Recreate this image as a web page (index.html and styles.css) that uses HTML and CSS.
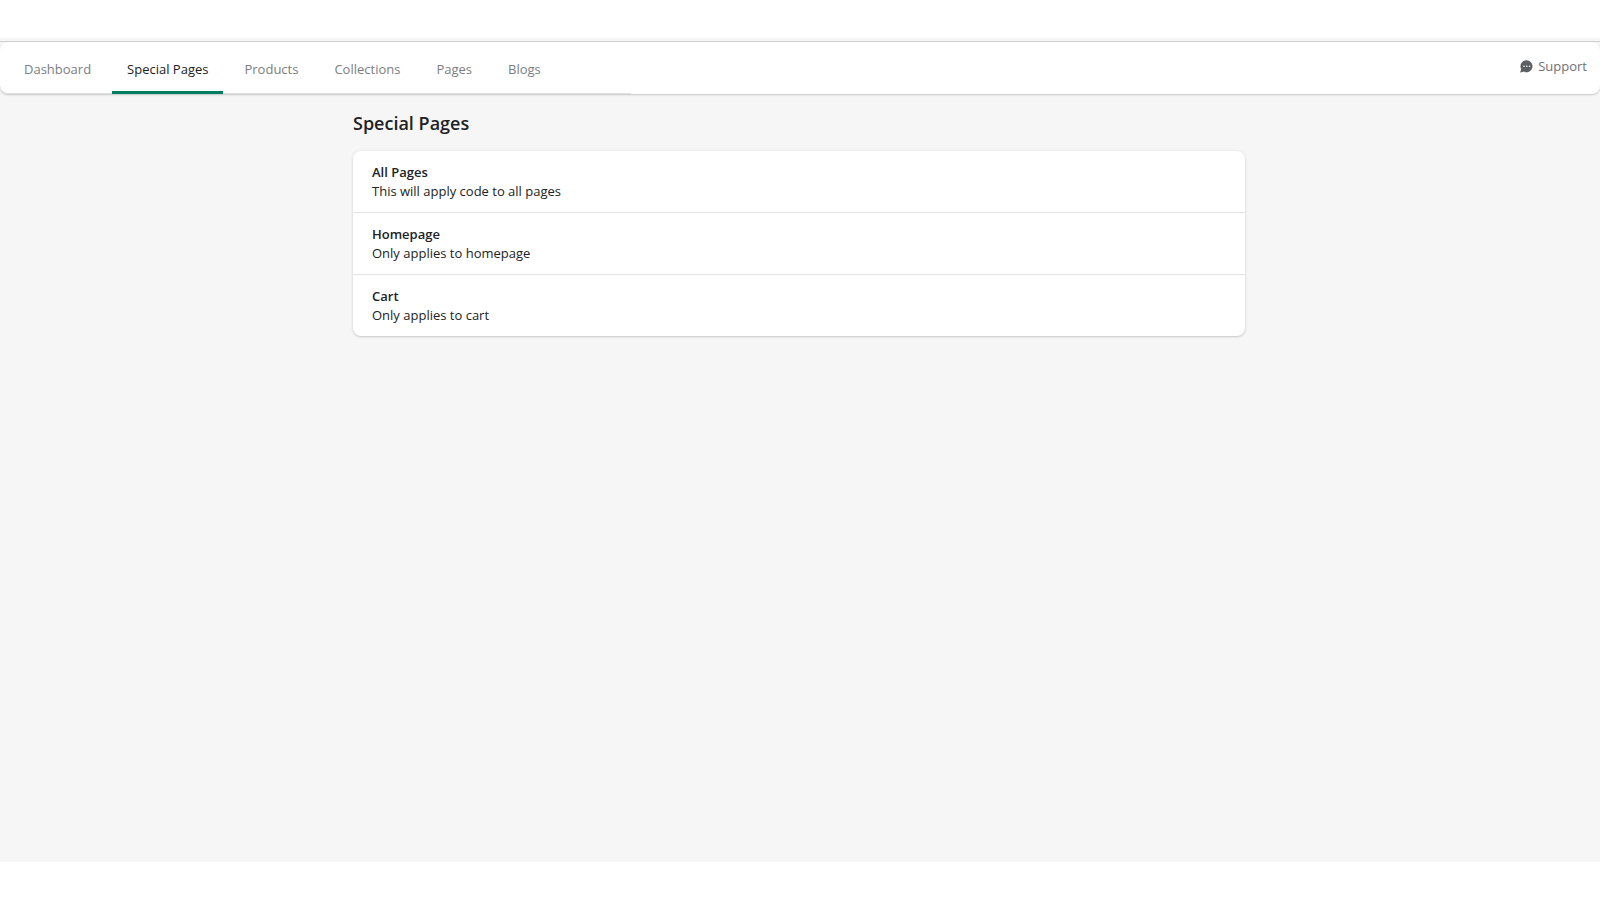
FILE: index.html
```html
<!DOCTYPE html>
<html lang="en">
<head>
<meta charset="utf-8">
<title>Special Pages</title>
<link rel="stylesheet" href="styles.css">
</head>
<body>
<div class="app">
  <header class="topbar">
    <nav class="tabs" aria-label="Main">
      <a class="tab" href="#dashboard">Dashboard</a>
      <a class="tab tab-active" href="#special" aria-current="page">Special Pages</a>
      <a class="tab" href="#products">Products</a>
      <a class="tab" href="#collections">Collections</a>
      <a class="tab" href="#pages">Pages</a>
      <a class="tab" href="#blogs">Blogs</a>
    </nav>
    <a class="support" href="#support">
      <svg class="support-icon" viewBox="0 0 13 13" aria-hidden="true">
        <path fill="#5c5f62" d="M6.8.2a6 6 0 1 1-2.9 11.400L.8 12.500c-.4.1-.6-.2-.5-.5l.9-3A6 6 0 0 1 6.800.2Z"/>
        <g fill="#fff"><circle cx="4" cy="6.300" r=".8"/><circle cx="6.800" cy="6.300" r=".8"/><circle cx="9.600" cy="6.300" r=".8"/></g>
      </svg>
      Support
    </a>
  </header>
  <main class="page">
    <h1 class="title">Special Pages</h1>
    <ul class="card">
      <li class="row"><h2 class="row-title">All Pages</h2><p class="row-text">This will apply code to all pages</p></li>
      <li class="row"><h2 class="row-title">Homepage</h2><p class="row-text">Only applies to homepage</p></li>
      <li class="row"><h2 class="row-title">Cart</h2><p class="row-text">Only applies to cart</p></li>
    </ul>
  </main>
</div>
</body>
</html>
```
FILE: styles.css
```css
* { box-sizing: border-box; }

body {
  margin: 0;
  min-height: 100vh;
  display: flex;
  flex-direction: column;
  padding: 38px 0;
  background: #fff;
  color: #202223;
  font: 13px/19px "Segoe UI", "Open Sans", "Noto Sans", sans-serif;
}

.app {
  flex: 1;
  background: #f6f6f6;
}

.app::before {
  content: "";
  display: block;
  height: 3px;
  border-bottom: 1px solid #cfcfcf;
}

.topbar {
  display: flex;
  justify-content: space-between;
  align-items: flex-start;
  border-radius: 8px;
  background: #fff;
  box-shadow: 0 1px 2px rgba(0, 0, 0, 0.2);
}

.tabs {
  display: flex;
  gap: 6px;
  padding: 0 75px 0 9px;
  border-radius: 0 0 0 8px;
  box-shadow: inset 0 -1px #dfdfdf;
}

.tab {
  padding: 18px 15px 12px;
  border-bottom: 3px solid transparent;
  color: #7b7e81;
  text-decoration: none;
}

.tab-active {
  border-color: #008060;
  border-radius: 2px 2px 0 0;
  color: #202223;
}

.support {
  display: flex;
  align-items: center;
  gap: 5px;
  padding: 15px 13px 0 0;
  color: #6d7175;
  text-decoration: none;
}

.support-icon {
  width: 13px;
  height: 13px;
}

.page {
  max-width: 894px;
  margin: 0 auto;
  padding-right: 2px;
}

.title {
  margin: 0;
  padding: 16px 0 14px;
  font-size: 18px;
  line-height: 27px;
  font-weight: 600;
}

.card {
  margin: 0;
  padding: 0;
  list-style: none;
  border-radius: 8px;
  background: #fff;
  box-shadow: 0 0 4px rgba(23, 24, 24, 0.06), 0 1px 2px rgba(0, 0, 0, 0.16);
}

.row { padding: 12px 19px 11px; }

.row + .row { border-top: 1px solid #e1e3e5; }

.row-title, .row-text {
  margin: 0;
  font-size: 13px;
  line-height: 19px;
}

.row-title { font-weight: 600; }
```
